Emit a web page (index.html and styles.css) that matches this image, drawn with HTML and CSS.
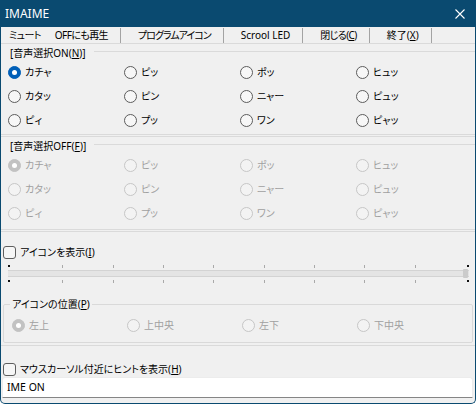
FILE: index.html
```html
<!DOCTYPE html>
<html lang="ja">
<head>
<meta charset="utf-8">
<title>IMAIME</title>
<link rel="stylesheet" href="styles.css">
</head>
<body>
<div class="window">
  <header class="titlebar">
    <span class="title">IMAIME</span>
    <svg class="close" width="10" height="10" viewBox="0 0 10 10"><path d="M0.5 0.5L9.5 9.5M9.5 0.5L0.5 9.5" stroke="#fff" stroke-width="1.1" fill="none"/></svg>
  </header>
  <nav class="menubar">
    <span class="mi tight mute">ミュート</span>
    <span class="mi tight">OFFにも再生</span>
    <span class="sep"></span>
    <span class="mi tighter">プログラムアイコン</span>
    <span class="sep"></span>
    <span class="mi">Scrool LED</span>
    <span class="sep"></span>
    <span class="mi tight">閉じる(<u>C</u>)</span>
    <span class="sep"></span>
    <span class="mi">終了(<u>X</u>)</span>
    <span class="sep"></span>
  </nav>

  <section class="panel panel-on">
    <div class="glabel"><span>[音声選択ON(<u>N</u>)]</span><i class="gline"></i></div>
    <div class="rgrid">
      <label class="opt"><span class="radio checked"></span>カチャ</label>
      <label class="opt"><span class="radio"></span>ピッ</label>
      <label class="opt"><span class="radio"></span>ポッ</label>
      <label class="opt"><span class="radio"></span>ヒュッ</label>
      <label class="opt"><span class="radio"></span>カタッ</label>
      <label class="opt"><span class="radio"></span>ピン</label>
      <label class="opt"><span class="radio"></span>ニャー</label>
      <label class="opt"><span class="radio"></span>ピュッ</label>
      <label class="opt"><span class="radio"></span>ピィ</label>
      <label class="opt"><span class="radio"></span>プッ</label>
      <label class="opt"><span class="radio"></span>ワン</label>
      <label class="opt"><span class="radio"></span>ピャッ</label>
    </div>
  </section>

  <section class="panel panel-off">
    <div class="glabel"><span>[音声選択OFF(<u>F</u>)]</span><i class="gline"></i></div>
    <div class="rgrid disabled">
      <label class="opt"><span class="radio checked"></span>カチャ</label>
      <label class="opt"><span class="radio"></span>ピッ</label>
      <label class="opt"><span class="radio"></span>ポッ</label>
      <label class="opt"><span class="radio"></span>ヒュッ</label>
      <label class="opt"><span class="radio"></span>カタッ</label>
      <label class="opt"><span class="radio"></span>ピン</label>
      <label class="opt"><span class="radio"></span>ニャー</label>
      <label class="opt"><span class="radio"></span>ピュッ</label>
      <label class="opt"><span class="radio"></span>ピィ</label>
      <label class="opt"><span class="radio"></span>プッ</label>
      <label class="opt"><span class="radio"></span>ワン</label>
      <label class="opt"><span class="radio"></span>ピャッ</label>
    </div>
  </section>

  <section class="panel panel-icon">
    <label class="check"><span class="box"></span><span>アイコンを表示(<u>I</u>)</span></label>
    <div class="slider">
      <div class="ticks top"><i class="t end"></i><i class="t"></i><i class="t"></i><i class="t"></i><i class="t"></i><i class="t"></i><i class="t"></i><i class="t"></i><i class="t"></i><i class="t end"></i></div>
      <div class="track"></div>
      <div class="ticks bottom"><i class="t end"></i><i class="t"></i><i class="t"></i><i class="t"></i><i class="t"></i><i class="t"></i><i class="t"></i><i class="t"></i><i class="t"></i><i class="t end"></i></div>
      <span class="thumb"></span>
    </div>
    <fieldset class="posbox">
      <legend>アイコンの位置(<u>P</u>)</legend>
      <div class="prow disabled">
        <label class="opt"><span class="radio checked"></span>左上</label>
        <label class="opt"><span class="radio"></span>上中央</label>
        <label class="opt"><span class="radio"></span>左下</label>
        <label class="opt"><span class="radio"></span>下中央</label>
      </div>
    </fieldset>
  </section>

  <section class="panel-hint">
    <label class="check"><span class="box"></span><span>マウスカーソル付近にヒントを表示(<u>H</u>)</span></label>
    <div class="textbox">IME ON</div>
  </section>
</div>
</body>
</html>
```

FILE: styles.css
```css
* { box-sizing: border-box; }
html, body { margin: 0; padding: 0; background: #ffffff; }
body {
  width: 476px;
  height: 404px;
  font-family: "Noto Sans", "Noto Sans CJK JP", sans-serif;
  font-size: 10px;
  line-height: 14px;
  color: #000;
  font-feature-settings: "palt";
}
u { text-decoration: underline; text-underline-offset: 1px; }

.window {
  width: 476px;
  height: 404px;
  display: flex;
  flex-direction: column;
  background: #f0f0f0;
  border: 1px solid #0a4a70;
  border-top: 0;
  border-radius: 0 0 5px 5px;
  overflow: hidden;
}

.titlebar {
  flex: none;
  height: 27px;
  margin: 0 -1px;
  background: #0a4a70;
  color: #fff;
  display: flex;
  align-items: center;
  justify-content: space-between;
  padding: 0 11px 0 5px;
  font-size: 12px;
}
.close { display: block; }

.menubar {
  flex: none;
  height: 16px;
  display: flex;
  align-items: center;
  padding-left: 8px;
  white-space: nowrap;
}
.mi { flex: none; }
.mi.tight { letter-spacing: -0.6px; }
.mi.tighter { letter-spacing: -1px; }
.mi.mute { margin-right: 14px; }
.sep {
  flex: none;
  width: 1px;
  height: 15px;
  background: #a3a3a3;
  margin: 0 17px 0 12px;
}

.panel {
  border-top: 1px solid #dadada;
  border-bottom: 1px solid #dadada;
}
.panel-on { padding: 2px 0 2px 7px; }
.panel-off { margin-top: 1px; padding: 2px 0 4px 7px; }

.glabel {
  display: flex;
  align-items: flex-start;
  padding-left: 2px;
  white-space: nowrap;
}
.gline {
  flex: 1;
  margin: 5px 0 0 8px;
  border-top: 1px solid #dadada;
}

.rgrid {
  display: grid;
  grid-template-columns: repeat(4, 116px);
  grid-auto-rows: 24px;
}
.opt {
  display: flex;
  align-items: center;
  gap: 4px;
  white-space: nowrap;
}
.radio {
  flex: none;
  width: 13px;
  height: 13px;
  border-radius: 50%;
  border: 1px solid #5c5c5c;
  background: #f7f7f7;
  position: relative;
}
.radio.checked {
  border-color: #005fb8;
  background: #005fb8;
}
.radio.checked::after {
  content: "";
  position: absolute;
  left: 3px;
  top: 3px;
  width: 5px;
  height: 5px;
  border-radius: 50%;
  background: #fff;
}
.disabled .opt { color: #a0a0a0; }
.disabled .radio { border-color: #c6c6c6; background: #f3f3f3; }
.disabled .radio.checked { border-color: #c2c2c2; background: #c2c2c2; }

.panel-icon {
  margin-top: 1px;
  padding: 12px 0 2px 0;
}
.check {
  display: flex;
  align-items: center;
  gap: 4px;
  height: 16px;
  padding-left: 2px;
  white-space: nowrap;
}
.box {
  flex: none;
  width: 13px;
  height: 13px;
  border: 1px solid #5e5e5e;
  border-radius: 3px;
  background: #f6f6f6;
}

.slider {
  position: relative;
  margin: 4px 6px 0 7px;
  height: 20px;
}
.ticks {
  position: relative;
  display: flex;
  justify-content: space-between;
  padding: 0 3px 0 4px;
}
.ticks.top { height: 6px; align-items: flex-start; padding-top: 1px; }
.ticks.bottom { height: 7px; align-items: flex-start; padding-top: 3px; }
.t { display: block; width: 1px; height: 3px; background: #a9a9a9; }
.t.end { background: transparent; }
.ticks::before, .ticks::after {
  content: "";
  position: absolute;
  width: 2px;
  height: 2px;
  background: #111;
}
.ticks.top::before { left: 0; top: 1px; }
.ticks.top::after { right: 0; top: 1px; }
.ticks.bottom::before { left: 0; top: 3px; }
.ticks.bottom::after { right: 0; top: 3px; }
.track {
  height: 7px;
  background: #e4e4e4;
  border-top: 1px solid #d3d3d3;
  border-bottom: 1px solid #d3d3d3;
}
.thumb {
  position: absolute;
  right: 1px;
  top: 5px;
  width: 5px;
  height: 9px;
  background: #cbcbcb;
  border-radius: 1px;
}

.posbox {
  margin: 13px 2px 0 2px;
  padding: 2px 6px 5px 6px;
  border: 1px solid #d9d9d9;
  border-radius: 2px;
  min-width: 0;
}
.posbox legend {
  padding: 0 2px;
  line-height: 14px;
}
.prow {
  display: grid;
  grid-template-columns: repeat(4, 115px);
  height: 24px;
  padding-left: 2px;
}

.panel-hint {
  flex: 1;
  padding: 15px 0 0 0;
}
.textbox {
  margin: 0 2px 0 1px;
  height: 21px;
  background: #fff;
  border: 1px solid #ececec;
  border-bottom: 1px solid #858585;
  border-radius: 3px 3px 0 0;
  padding-left: 4px;
  line-height: 19px;
  font-size: 10.5px;
}
```
